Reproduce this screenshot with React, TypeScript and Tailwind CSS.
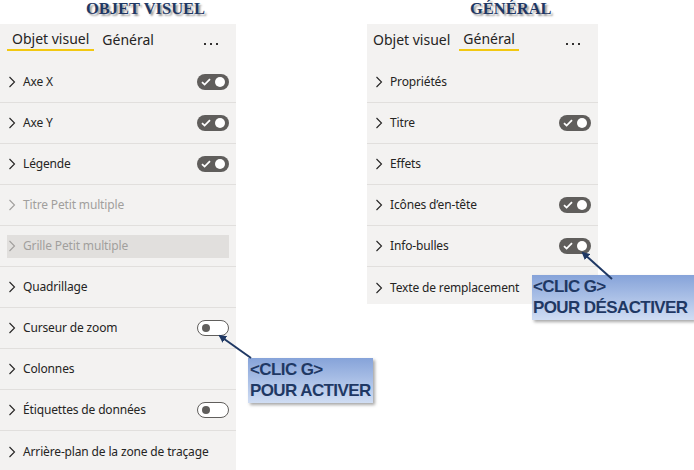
import React from "react";

const ui = { fontFamily: '"Noto Sans", "Open Sans", sans-serif' };

function Chevron({ dim }: { dim?: boolean }) {
  return (
    <svg width="8" height="12" viewBox="0 0 8 12" className="shrink-0">
      <path d="M1.5 1 L6.5 6 L1.5 11" fill="none" stroke={dim ? "#a19f9d" : "#252423"} strokeWidth="1.1" />
    </svg>
  );
}

function ToggleOn() {
  return (
    <div className="w-[32px] h-[16px] rounded-full bg-[#605e5c] flex items-center justify-between px-[4px]">
      <svg width="10" height="8" viewBox="0 0 10 8">
        <path d="M1 4.2 L3.6 6.6 L9 1.2" fill="none" stroke="#ffffff" strokeWidth="1.8" />
      </svg>
      <div className="w-[10px] h-[10px] rounded-full bg-white" />
    </div>
  );
}

function ToggleOff() {
  return (
    <div className="w-[32px] h-[16px] rounded-full bg-white border border-[#605e5c] flex items-center px-[4px]">
      <div className="w-[8px] h-[8px] rounded-full bg-[#605e5c]" />
    </div>
  );
}

type Row = { label: string; toggle?: "on" | "off"; dim?: boolean; hl?: boolean; last?: boolean };

function RowItem({ r }: { r: Row }) {
  return (
    <div className={`h-[41px] px-[7px] flex items-center ${r.last ? "" : "border-b border-[#e1dfdd]"}`}>
      <div className={`flex-1 h-[23px] flex items-center gap-[7px] pl-[1px] ${r.hl ? "bg-[#e1dfdd]" : ""}`}>
        <Chevron dim={r.dim} />
        <span className={`flex-1 text-[12px] tracking-[-0.15px] ${r.dim ? "text-[#a19f9d]" : "text-[#252423]"}`}>{r.label}</span>
        {r.toggle === "on" && <ToggleOn />}
        {r.toggle === "off" && <ToggleOff />}
      </div>
    </div>
  );
}

function Tabs({ active }: { active: 0 | 1 }) {
  return (
    <div className={`h-[38px] flex items-start pt-[4px] ${active === 0 ? "pl-[7px]" : "pl-[1px]"} pr-[7px]`}>
      <div className={`px-[5px] h-[23px] flex items-center text-[14px] text-[#252423] ${active === 0 ? "border-b-2 border-[#f2c811]" : ""}`}>
        Objet visuel
      </div>
      <div className={`ml-[4px] px-[4px] h-[23px] flex items-center text-[14px] text-[#252423] ${active === 1 ? "border-b-2 border-[#f2c811]" : ""}`}>
        Général
      </div>
      <div className="flex-1" />
      <div className="pr-[11px] pt-[15px] flex gap-[4px]">
        <div className="w-[2px] h-[2px] bg-[#323130]" />
        <div className="w-[2px] h-[2px] bg-[#323130]" />
        <div className="w-[2px] h-[2px] bg-[#323130]" />
      </div>
    </div>
  );
}

const leftRows: Row[] = [
  { label: "Axe X", toggle: "on" },
  { label: "Axe Y", toggle: "on" },
  { label: "Légende", toggle: "on" },
  { label: "Titre Petit multiple", dim: true },
  { label: "Grille Petit multiple", dim: true, hl: true },
  { label: "Quadrillage" },
  { label: "Curseur de zoom", toggle: "off" },
  { label: "Colonnes" },
  { label: "Étiquettes de données", toggle: "off" },
  { label: "Arrière-plan de la zone de traçage", last: true },
];

const rightRows: Row[] = [
  { label: "Propriétés" },
  { label: "Titre", toggle: "on" },
  { label: "Effets" },
  { label: "Icônes d’en-tête", toggle: "on" },
  { label: "Info-bulles", toggle: "on" },
  { label: "Texte de remplacement", last: true },
];

const titleStyle: React.CSSProperties = {
  fontFamily: '"Liberation Serif", "Times New Roman", serif',
  textShadow: "2px 2px 2px rgba(0,0,0,0.4)",
};

const calloutFont: React.CSSProperties = {
  fontFamily: '"Liberation Sans", Arial, sans-serif',
};

export default function App() {
  return (
    <div className="relative w-[694px] h-[470px] bg-white overflow-hidden" style={ui}>
      <div className="flex">
        <div className="w-[236px] flex flex-col">
          <div className="h-[24px] pl-[86px] text-[16.5px] font-bold text-[#1f3864] leading-[18px]" style={titleStyle}>
            OBJET VISUEL
          </div>
          <div className="bg-[#f3f2f1] h-[446px]">
            <Tabs active={0} />
            {leftRows.map((r) => (
              <RowItem key={r.label} r={r} />
            ))}
          </div>
        </div>
        <div className="ml-[131px] w-[231px] flex flex-col">
          <div className="h-[24px] pl-[103px] text-[16.5px] font-bold text-[#1f3864] leading-[18px]" style={titleStyle}>
            GÉNÉRAL
          </div>
          <div className="bg-[#f3f2f1] h-[280px]">
            <Tabs active={1} />
            {rightRows.map((r) => (
              <RowItem key={r.label} r={r} />
            ))}
          </div>
        </div>
      </div>

      {/* Callouts */}
      <div
        className="absolute left-[248px] top-[358px] w-[125px] h-[45px] bg-gradient-to-b from-[#86a3d9] to-[#d0ddf3] shadow-[2px_2px_3px_rgba(0,0,0,0.35)] px-[2px] pt-[1px] text-[17px] leading-[21px] font-bold text-[#1f3864] tracking-[-0.6px]"
        style={calloutFont}
      >
        <div>&lt;CLIC G&gt;</div>
        <div>POUR ACTIVER</div>
      </div>
      <div
        className="absolute left-[532px] top-[275px] w-[162px] h-[45px] bg-gradient-to-b from-[#86a3d9] to-[#d0ddf3] shadow-[2px_2px_3px_rgba(0,0,0,0.35)] px-[1px] pt-[1px] text-[17px] leading-[21px] font-bold text-[#1f3864] tracking-[-0.6px]"
        style={calloutFont}
      >
        <div>&lt;CLIC G&gt;</div>
        <div>POUR DÉSACTIVER</div>
      </div>

      {/* Arrows */}
      <svg className="absolute left-0 top-0" width="694" height="470" viewBox="0 0 694 470">
        <defs>
          <marker id="ah" markerWidth="8" markerHeight="8" refX="6" refY="4" orient="auto" markerUnits="userSpaceOnUse">
            <path d="M0 0 L8 4 L0 8 Z" fill="#1f3864" />
          </marker>
        </defs>
        <line x1="251" y1="358" x2="220" y2="336" stroke="#1f3864" strokeWidth="2" markerEnd="url(#ah)" />
        <line x1="612" y1="279" x2="583" y2="253" stroke="#1f3864" strokeWidth="2" markerEnd="url(#ah)" />
      </svg>
    </div>
  );
}
